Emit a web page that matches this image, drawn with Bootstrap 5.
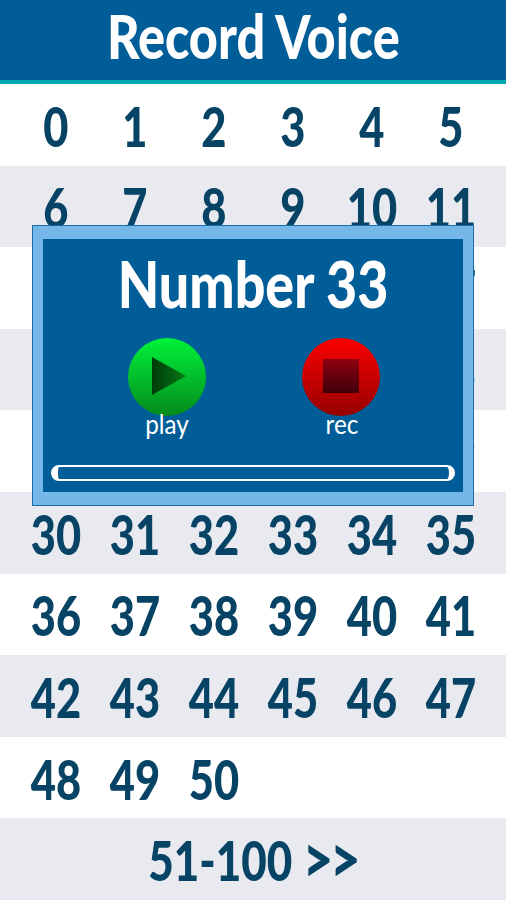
<!DOCTYPE html>
<html lang="en">
<head>
<meta charset="utf-8">
<title>Record Voice</title>
<link href="https://cdn.jsdelivr.net/npm/bootstrap@5.3.0/dist/css/bootstrap.min.css" rel="stylesheet">
<style>
html, body { height: 900px; overflow: hidden; background: #fff; }
.stage { height: 900px; font-family: Lato, "Liberation Sans", sans-serif; font-weight: 900; color: #074365; }
.squeeze { display: inline-block; transform: scaleX(.79); white-space: nowrap; }
.squeeze-wide { display: inline-block; transform: scaleX(.84); white-space: nowrap; }
.app-head { height: 84px; background: #005d98; border-bottom: 4px solid #04a8b0; color: #fff; font-size: 60px; line-height: 73px; }
.num-row { flex: 1 1 0; padding: 3px 16px 0; font-size: 55px; line-height: 1; }
.num-row:nth-child(even) { background: #e9e9f0; }
.num-cell { width: 79px; text-align: center; }
.next-text { transform: scaleX(.8); }
.chev { font-size: 66px; line-height: 50px; vertical-align: -2px; letter-spacing: -4px; }
.dialog-frame { position: absolute; left: 32px; top: 225px; width: 442px; height: 281px; background: #74b7e8; border: 1px solid #1a6ca8; padding: 13px 10px; }
.dialog-body { height: 100%; background: #005d98; color: #fff; padding: 13px 8px 0; }
.dialog-title { font-size: 64px; line-height: 1; height: 86px; }
.act { width: 80px; font-weight: 400; font-size: 27px; line-height: 1; }
.act svg { display: block; margin: 0 auto; }
.act-play { margin-left: 76px; }
.act-rec { margin-left: 95px; }
.act-label { display: block; margin-top: -6px; transform: scaleX(.9); }
.track { height: 16px; margin-top: 28px; border: 2px solid #fff; border-left-width: 7px; border-right-width: 6px; border-radius: 8px; }
</style>
</head>
<body>
<div class="stage position-relative d-flex flex-column">
  <div class="app-head text-center"><span class="squeeze-wide">Record Voice</span></div>
  <div class="flex-grow-1 d-flex flex-column" id="rows">
    <div class="num-row d-flex align-items-center"><div class="num-cell"><span class="squeeze">0</span></div><div class="num-cell"><span class="squeeze">1</span></div><div class="num-cell"><span class="squeeze">2</span></div><div class="num-cell"><span class="squeeze">3</span></div><div class="num-cell"><span class="squeeze">4</span></div><div class="num-cell"><span class="squeeze">5</span></div></div>
    <div class="num-row d-flex align-items-center"><div class="num-cell"><span class="squeeze">6</span></div><div class="num-cell"><span class="squeeze">7</span></div><div class="num-cell"><span class="squeeze">8</span></div><div class="num-cell"><span class="squeeze">9</span></div><div class="num-cell"><span class="squeeze">10</span></div><div class="num-cell"><span class="squeeze">11</span></div></div>
    <div class="num-row d-flex align-items-center"><div class="num-cell"><span class="squeeze">12</span></div><div class="num-cell"><span class="squeeze">13</span></div><div class="num-cell"><span class="squeeze">14</span></div><div class="num-cell"><span class="squeeze">15</span></div><div class="num-cell"><span class="squeeze">16</span></div><div class="num-cell"><span class="squeeze">17</span></div></div>
    <div class="num-row d-flex align-items-center"><div class="num-cell"><span class="squeeze">18</span></div><div class="num-cell"><span class="squeeze">19</span></div><div class="num-cell"><span class="squeeze">20</span></div><div class="num-cell"><span class="squeeze">21</span></div><div class="num-cell"><span class="squeeze">22</span></div><div class="num-cell"><span class="squeeze">23</span></div></div>
    <div class="num-row d-flex align-items-center"><div class="num-cell"><span class="squeeze">24</span></div><div class="num-cell"><span class="squeeze">25</span></div><div class="num-cell"><span class="squeeze">26</span></div><div class="num-cell"><span class="squeeze">27</span></div><div class="num-cell"><span class="squeeze">28</span></div><div class="num-cell"><span class="squeeze">29</span></div></div>
    <div class="num-row d-flex align-items-center"><div class="num-cell"><span class="squeeze">30</span></div><div class="num-cell"><span class="squeeze">31</span></div><div class="num-cell"><span class="squeeze">32</span></div><div class="num-cell"><span class="squeeze">33</span></div><div class="num-cell"><span class="squeeze">34</span></div><div class="num-cell"><span class="squeeze">35</span></div></div>
    <div class="num-row d-flex align-items-center"><div class="num-cell"><span class="squeeze">36</span></div><div class="num-cell"><span class="squeeze">37</span></div><div class="num-cell"><span class="squeeze">38</span></div><div class="num-cell"><span class="squeeze">39</span></div><div class="num-cell"><span class="squeeze">40</span></div><div class="num-cell"><span class="squeeze">41</span></div></div>
    <div class="num-row d-flex align-items-center"><div class="num-cell"><span class="squeeze">42</span></div><div class="num-cell"><span class="squeeze">43</span></div><div class="num-cell"><span class="squeeze">44</span></div><div class="num-cell"><span class="squeeze">45</span></div><div class="num-cell"><span class="squeeze">46</span></div><div class="num-cell"><span class="squeeze">47</span></div></div>
    <div class="num-row d-flex align-items-center"><div class="num-cell"><span class="squeeze">48</span></div><div class="num-cell"><span class="squeeze">49</span></div><div class="num-cell"><span class="squeeze">50</span></div></div>
    <div class="num-row d-flex align-items-center justify-content-center"><span class="squeeze next-text">51-100 <span class="chev">&gt;&gt;</span></span></div>
  </div>
  <div class="dialog-frame">
    <div class="dialog-body">
      <div class="dialog-title text-center"><span class="squeeze-wide">Number 33</span></div>
      <div class="d-flex">
        <div class="act act-play text-center">
          <svg width="80" height="78" viewBox="0 0 80 78">
            <defs>
              <linearGradient id="gGreen" x1="0" y1="0" x2="0" y2="1"><stop offset="0" stop-color="#00f23a"/><stop offset="1" stop-color="#048a1c"/></linearGradient>
              <linearGradient id="gTri" x1="0" y1="0" x2="1" y2="0"><stop offset="0" stop-color="#003a0a"/><stop offset="1" stop-color="#047a14"/></linearGradient>
            </defs>
            <circle cx="40" cy="39" r="39" fill="url(#gGreen)"/>
            <path d="M25 19 L59 38 L25 57 Z" fill="url(#gTri)"/>
          </svg>
          <span class="act-label">play</span>
        </div>
        <div class="act act-rec text-center">
          <svg width="80" height="78" viewBox="0 0 80 78">
            <defs>
              <linearGradient id="gRed" x1="0" y1="0" x2="0" y2="1"><stop offset="0" stop-color="#fb0000"/><stop offset="1" stop-color="#960000"/></linearGradient>
              <linearGradient id="gSq" x1="0" y1="0" x2="0" y2="1"><stop offset="0" stop-color="#8f0012"/><stop offset="1" stop-color="#3f0008"/></linearGradient>
            </defs>
            <circle cx="39" cy="39" r="39" fill="url(#gRed)"/>
            <rect x="21" y="21" width="36" height="34" fill="url(#gSq)"/>
          </svg>
          <span class="act-label">rec</span>
        </div>
      </div>
      <div class="track"></div>
    </div>
  </div>
</div>
<script src="https://cdn.jsdelivr.net/npm/bootstrap@5.3.0/dist/js/bootstrap.bundle.min.js"></script>
</body>
</html>
